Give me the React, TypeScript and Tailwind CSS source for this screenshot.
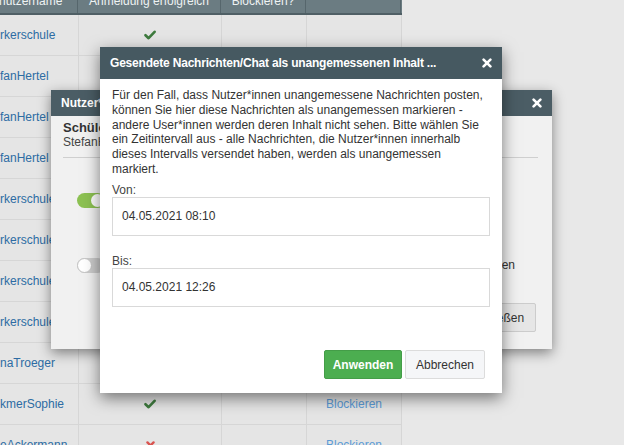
import React from "react";

const names = [
  "rkerschule",
  "fanHertel",
  "fanHertel",
  "fanHertel",
  "rkerschule",
  "rkerschule",
  "rkerschule",
  "rkerschule",
  "naTroeger",
  "kmerSophie",
  "eAckermann",
];
const status = [true, true, true, false, true, true, true, true, true, true, false];
const block = [false, false, true, false, false, true, false, true, true, true, true];

function Check() {
  return (
    <svg width="12" height="10" viewBox="0 0 12 10">
      <path d="M1.5 5.2 L4.6 8.2 L10.6 1.8" fill="none" stroke="#3e7b3e" strokeWidth="2.6" strokeLinecap="round" strokeLinejoin="round" />
    </svg>
  );
}

function Cross({ color = "#d9534f", size = 9 }: { color?: string; size?: number }) {
  return (
    <svg width={size} height={size} viewBox="0 0 10 10">
      <path d="M1.6 1.6 L8.4 8.4 M8.4 1.6 L1.6 8.4" fill="none" stroke={color} strokeWidth="2.6" strokeLinecap="round" />
    </svg>
  );
}

export default function App() {
  return (
    <div className="relative w-[624px] h-[445px] overflow-hidden bg-[#e8e8e8] font-['Liberation_Sans',Arial,sans-serif] text-[12px]">
      {/* background table */}
      <div className="w-[402px] flex flex-col">
        <div className="flex h-[15px] bg-[#6b7c82] border-b-2 border-[#4f5f65] text-[#eef2f3] overflow-hidden">
          <div className="w-[78px] -ml-[1px]"><div className="-mt-[6px] leading-[14px]">nutzername</div></div>
          <div className="w-[143px] border-l border-[#56666c] text-center"><div className="-mt-[6px] leading-[14px]">Anmeldung erfolgreich</div></div>
          <div className="w-[85px] border-l border-[#56666c] text-center"><div className="-mt-[6px] leading-[14px]">Blockieren?</div></div>
          <div className="w-[96px] border-l border-r border-[#56666c]"></div>
        </div>
        {names.map((n, i) => (
          <div key={i} className="flex h-[41px] shrink-0 border-b border-[#d6d6d6] bg-[#e5e5e5]">
            <div className="w-[78px] flex items-center text-[#2d6ca3] overflow-hidden whitespace-nowrap">{n}</div>
            <div className="w-[143px] border-l border-[#d6d6d6] flex items-center justify-center">
              {status[i] ? <Check /> : <Cross />}
            </div>
            <div className="w-[85px] border-l border-[#d6d6d6]"></div>
            <div className="w-[96px] border-l border-r border-[#d6d6d6] flex items-center justify-center text-[#5b9bd6]">
              {block[i] ? "Blockieren" : ""}
            </div>
          </div>
        ))}
      </div>

      {/* modal behind */}
      <div className="absolute left-[51px] top-[90px] w-[501px] h-[259px] bg-[#f1f1f1] flex flex-col shadow-[0_4px_12px_rgba(0,0,0,0.45)]">
        <div className="h-[26px] shrink-0 bg-[#4b5d65] flex items-center justify-between pl-[10px] pr-[10px] text-white font-bold">
          <span>Nutzer*in verwalten</span>
          <Cross color="#ffffff" size={10} />
        </div>
        <div className="px-[12px] pt-[5px] flex flex-col flex-1">
          <div className="leading-[14px] font-bold text-[#333] text-[13px]">Schüler*in</div>
          <div className="leading-[14px] text-[#444]">StefanHertel</div>
          <div className="mt-[8px] mx-0 w-[475px] border-b border-[#cfcfcf]"></div>
          <div className="mt-[33px] pl-[14px] flex items-center">
            <div className="w-[28px] h-[15px] rounded-full bg-[#8cc152] flex items-center justify-end pr-[1px]">
              <div className="w-[13px] h-[13px] rounded-full bg-white"></div>
            </div>
            <span className="ml-[10px] text-[#333]">Nutzer*in blockieren</span>
          </div>
          <div className="mt-[47px] pl-[14px] flex items-center">
            <div className="w-[28px] h-[15px] rounded-full bg-[#cccccc] flex items-center justify-start">
              <div className="w-[15px] h-[15px] rounded-full bg-white border border-[#c4c4c4]"></div>
            </div>
            <span className="ml-auto mr-[25px] text-[#333]">Nachrichten als unangemessen markieren</span>
          </div>
          <div className="mt-auto mb-[17px] self-end mr-[4px] h-[29px] w-[77px] flex items-center justify-center bg-[#e6e6e6] border border-[#cccccc] rounded-[2px] text-[#333]">
            Schließen
          </div>
        </div>
      </div>

      {/* front modal */}
      <div className="absolute left-[100px] top-[47px] w-[402px] h-[346px] bg-white flex flex-col shadow-[0_5px_15px_rgba(0,0,0,0.5)]">
        <div className="h-[32px] shrink-0 bg-[#465961] flex items-center justify-between pl-[10px] pr-[10px] text-white font-bold">
          <span className="tracking-[-0.2px]">Gesendete Nachrichten/Chat als unangemessenen Inhalt ...</span>
          <Cross color="#ffffff" size={10} />
        </div>
        <div className="px-[12px] pt-[9px] flex flex-col flex-1 text-[#333]">
          <p className="leading-[14.8px]">
            Für den Fall, dass Nutzer*innen unangemessene Nachrichten posten, können Sie hier diese Nachrichten als unangemessen markieren - andere User*innen werden deren Inhalt nicht sehen. Bitte wählen Sie ein Zeitintervall aus - alle Nachrichten, die Nutzer*innen innerhalb dieses Intervalls versendet haben, werden als unangemessen markiert.
          </p>
          <label className="mt-[6px] leading-[14px] text-[#444]">Von:</label>
          <div className="h-[39px] border border-[#d9d9d9] flex items-center pl-[9px]">04.05.2021 08:10</div>
          <label className="mt-[18px] leading-[14px] text-[#444]">Bis:</label>
          <div className="h-[39px] border border-[#d9d9d9] flex items-center pl-[9px]">04.05.2021 12:26</div>
          <div className="mt-auto mb-[14px] flex justify-end gap-[3px] pr-[5px]">
            <div className="h-[29px] w-[78px] flex items-center justify-center bg-[#4cae50] border border-[#449d48] rounded-[2px] text-white font-bold">Anwenden</div>
            <div className="h-[29px] w-[80px] flex items-center justify-center bg-[#f5f6f8] border border-[#dcdcdc] rounded-[2px] text-[#333]">Abbrechen</div>
          </div>
        </div>
      </div>
    </div>
  );
}
